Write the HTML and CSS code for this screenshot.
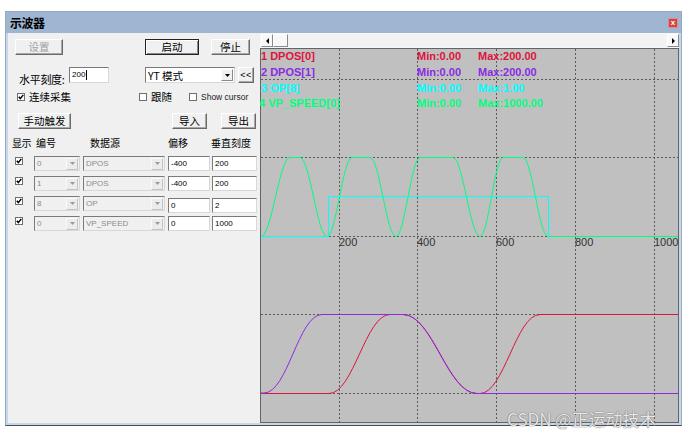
FILE: index.html
```html
<!DOCTYPE html>
<html lang="zh">
<head>
<meta charset="utf-8">
<title>示波器</title>
<link rel="stylesheet" href="styles.css">
</head>
<body>
<div class="window">
  <div class="titlebar">
    <span class="title">示波器</span>
    <span class="close">x</span>
  </div>
  <div class="body">
    <div class="panel">
      <div class="row r1">
        <div class="btn disabled b-set">设置</div>
        <div class="btn default b-start">启动</div>
        <div class="btn b-stop">停止</div>
      </div>
      <div class="row r2">
        <span class="lbl">水平刻度:</span>
        <div class="edit e-h">200<span class="caret"></span></div>
        <div class="combo c-mode"><span class="ctext">YT 模式</span><span class="drop"><svg width="5" height="3" viewBox="0 0 5 3"><path d="M0 0H5L2.5 3Z"/></svg></span></div>
        <div class="btn b-back">&lt;&lt;</div>
      </div>
      <div class="row r3">
        <div class="chk g1"><span class="box"><svg width="6" height="6" viewBox="0 0 6 6"><polyline points="0.8,2.8 2.3,4.6 5.3,0.9"/></svg></span><span>连续采集</span></div>
        <div class="chk g2"><span class="box"></span><span>跟随</span></div>
        <div class="chk g3"><span class="box"></span><span class="latin">Show cursor</span></div>
      </div>
      <div class="row r4">
        <div class="btn b-manual">手动触发</div>
        <div class="btn b-in">导入</div>
        <div class="btn b-out">导出</div>
      </div>
      <div class="tgrid thead">
        <span class="h1">显示</span>
        <span class="h2">编号</span>
        <span class="h3">数据源</span>
        <span class="h4">偏移</span>
        <span class="h5">垂直刻度</span>
      </div>
      <div class="tgrid trow">
        <span class="box tbox"><svg width="6" height="6" viewBox="0 0 6 6"><polyline points="0.8,2.8 2.3,4.6 5.3,0.9"/></svg></span>
        <div class="combo dis c-id"><span class="ctext">0</span><span class="drop"><svg width="5" height="3" viewBox="0 0 5 3"><path d="M0 0H5L2.5 3Z"/></svg></span></div>
        <div class="combo dis c-src"><span class="ctext">DPOS</span><span class="drop"><svg width="5" height="3" viewBox="0 0 5 3"><path d="M0 0H5L2.5 3Z"/></svg></span></div>
        <div class="edit c-off">-400</div>
        <div class="edit c-scale">200</div>
      </div>
      <div class="tgrid trow">
        <span class="box tbox"><svg width="6" height="6" viewBox="0 0 6 6"><polyline points="0.8,2.8 2.3,4.6 5.3,0.9"/></svg></span>
        <div class="combo dis c-id"><span class="ctext">1</span><span class="drop"><svg width="5" height="3" viewBox="0 0 5 3"><path d="M0 0H5L2.5 3Z"/></svg></span></div>
        <div class="combo dis c-src"><span class="ctext">DPOS</span><span class="drop"><svg width="5" height="3" viewBox="0 0 5 3"><path d="M0 0H5L2.5 3Z"/></svg></span></div>
        <div class="edit c-off">-400</div>
        <div class="edit c-scale">200</div>
      </div>
      <div class="tgrid trow">
        <span class="box tbox"><svg width="6" height="6" viewBox="0 0 6 6"><polyline points="0.8,2.8 2.3,4.6 5.3,0.9"/></svg></span>
        <div class="combo dis c-id"><span class="ctext">8</span><span class="drop"><svg width="5" height="3" viewBox="0 0 5 3"><path d="M0 0H5L2.5 3Z"/></svg></span></div>
        <div class="combo dis c-src"><span class="ctext">OP</span><span class="drop"><svg width="5" height="3" viewBox="0 0 5 3"><path d="M0 0H5L2.5 3Z"/></svg></span></div>
        <div class="edit c-off low">0</div>
        <div class="edit c-scale low">2</div>
      </div>
      <div class="tgrid trow">
        <span class="box tbox"><svg width="6" height="6" viewBox="0 0 6 6"><polyline points="0.8,2.8 2.3,4.6 5.3,0.9"/></svg></span>
        <div class="combo dis c-id"><span class="ctext">0</span><span class="drop"><svg width="5" height="3" viewBox="0 0 5 3"><path d="M0 0H5L2.5 3Z"/></svg></span></div>
        <div class="combo dis c-src"><span class="ctext">VP_SPEED</span><span class="drop"><svg width="5" height="3" viewBox="0 0 5 3"><path d="M0 0H5L2.5 3Z"/></svg></span></div>
        <div class="edit c-off">0</div>
        <div class="edit c-scale">1000</div>
      </div>
    </div>
    <div class="scope">
      <div class="hscroll">
        <div class="sb-btn"><svg width="3" height="6" viewBox="0 0 3 6"><path d="M3 0V6L0 3Z"/></svg></div>
        <div class="sb-thumb"></div>
        <div class="sb-track"></div>
        <div class="sb-btn"><svg width="3" height="6" viewBox="0 0 3 6"><path d="M0 0V6L3 3Z"/></svg></div>
      </div>
      <svg class="plot" width="419" height="375" viewBox="0 0 419 375">
        <rect x="0.5" y="0.5" width="418" height="374" fill="#c0c0c0" stroke="#646464"/>
        <g class="grid" stroke="#5a5a5a" stroke-width="1" stroke-dasharray="2 2" fill="none">
          <path d="M79.5 1V374M157.5 1V374M236.5 1V374M315.5 1V374M394.5 1V374"/>
          <path d="M1 31.5H418M1 109.5H418M1 188.5H418M1 266.5H418M1 345.5H418"/>
        </g>
        <g class="legend" font-family="Liberation Sans, Arial, sans-serif" font-weight="bold" font-size="11">
          <text x="1" y="12" fill="#dc143c">1 DPOS[0]</text>
          <text x="157" y="12" fill="#dc143c">Min:0.00</text>
          <text x="218" y="12" fill="#dc143c">Max:200.00</text>
          <text x="1" y="28" fill="#8a2be2">2 DPOS[1]</text>
          <text x="157" y="28" fill="#8a2be2">Min:0.00</text>
          <text x="218" y="28" fill="#8a2be2">Max:200.00</text>
          <text x="1" y="44" fill="#00ffff">3 OP[8]</text>
          <text x="157" y="44" fill="#00ffff">Min:0.00</text>
          <text x="218" y="44" fill="#00ffff">Max:1.00</text>
          <text x="-1" y="59" fill="#00ff7f">4 VP_SPEED[0]</text>
          <text x="157" y="59" fill="#00ff7f">Min:0.00</text>
          <text x="218" y="59" fill="#00ff7f">Max:1000.00</text>
        </g>
        <g class="axis" font-family="Liberation Sans, Arial, sans-serif" font-size="11" fill="#333">
          <text x="79" y="198">200</text>
          <text x="157" y="198">400</text>
          <text x="236" y="198">600</text>
          <text x="315" y="198">800</text>
          <text x="394" y="198">1000</text>
        </g>
        <g fill="none" stroke-width="1">
          <path stroke="#00ff7f" d="M1 188.5C11.6 188.5 19.4 109.5 30 109.5H40C49.8 109.5 57.2 188.5 67 188.5C76.1 188.5 82.9 109.5 92 109.5H110C119.5 109.5 126.5 188.5 136 188.5C144.7 188.5 151.3 109.5 160 109.5H193C202.8 109.5 210.2 188.5 220 188.5C228.4 188.5 234.6 109.5 243 109.5H263C272.1 109.5 278.9 188.5 288 188.5H418"/>
          <path stroke="#00ffff" d="M1 188.5H68.5V148.5H288.5V188.5"/>
          <path stroke="#dc143c" d="M1 345.5H69C93.4 345.5 105.6 266.5 130 266.5H143C172.6 266.5 187.4 345.5 217 345.5H220C244 345.5 256 266.5 280 266.5H418"/>
          <path stroke="#8a2be2" d="M1 345H4C27.6 345 38.4 266.5 62 266.5H143C172.6 266.5 187.4 345.5 217 345.5H418"/>
        </g>
      </svg>
    </div>
  </div>
</div>
<div class="watermark">CSDN @正运动技术</div>
</body>
</html>
```

FILE: styles.css
```css
* { box-sizing: border-box; }

body {
  margin: 0;
  background: #ffffff;
  font-family: "Noto Sans CJK SC", "Liberation Sans", sans-serif;
  font-size: 11px;
  color: #000;
}

.window {
  width: 677px;
  height: 415px;
  margin: 11px 0 0 5px;
  border: 1px solid #9aa8bb;
  border-bottom-color: #4b4b4b;
  background: #c6d6eb;
  display: flex;
  flex-direction: column;
}

.titlebar {
  height: 21px;
  flex: none;
  background: #9fb6d3;
  display: flex;
  align-items: center;
  justify-content: space-between;
  padding: 0 3px 0 4px;
}

.title {
  font-weight: bold;
  font-size: 12px;
  line-height: 14px;
  letter-spacing: -0.5px;
}

.close {
  width: 10px;
  height: 10px;
  background: #d04646;
  border: 1px solid #e58a8a;
  color: #fff;
  font: bold 8px/7px "Liberation Sans", sans-serif;
  text-align: center;
}

.body {
  flex: 1;
  display: flex;
  padding: 0 2px 2px 2px;
}

.panel {
  width: 252px;
  flex: none;
  background: #f0f0f0;
  padding-top: 6px;
  display: flex;
  flex-direction: column;
}

.row {
  display: flex;
  align-items: center;
  flex: none;
}

.r1 { height: 16px; }
.r2 { height: 16px; margin-top: 12px; }
.r3 { height: 12px; margin-top: 8px; }
.r4 { height: 16px; margin-top: 10px; }

.btn {
  height: 16px;
  display: flex;
  align-items: center;
  justify-content: center;
  background: #f0f0f0;
  border: 1px solid;
  border-color: #ffffff #6a6a6a #6a6a6a #ffffff;
  box-shadow: inset -1px -1px 0 #a8a8a8;
  font-size: 10.5px;
  line-height: 12px;
  flex: none;
}

.btn.default {
  border-color: #222;
  box-shadow: inset 1px 1px 0 #fff, inset -1px -1px 0 #8a8a8a;
}

.btn.disabled { color: #a0a0a0; }

.b-set { margin-left: 7px; width: 48px; }
.b-start { margin-left: 82px; width: 54px; }
.b-stop { margin-left: 12px; width: 39px; }
.b-back { margin-left: 3px; width: 16px; font: 9px/10px "Liberation Sans", sans-serif; letter-spacing: 0.5px; }
.b-manual { margin-left: 10px; width: 53px; }
.b-in { margin-left: 101px; width: 35px; }
.b-out { margin-left: 14px; width: 35px; }

.lbl {
  margin-left: 11px;
  width: 50px;
  flex: none;
  line-height: 12px;
  position: relative;
  top: 4px;
  letter-spacing: -0.3px;
}

.edit {
  height: 16px;
  background: #fff;
  border: 1px solid;
  border-color: #7a7a7a #d8d8d8 #d8d8d8 #7a7a7a;
  font: 8px/14px "Liberation Sans", sans-serif;
  padding-left: 2px;
  display: flex;
  align-items: center;
  flex: none;
}

.e-h { width: 40px; }

.caret {
  display: inline-block;
  width: 1px;
  height: 10px;
  background: #000;
  margin-left: 1px;
}

.combo {
  height: 16px;
  background: #fff;
  border: 1px solid;
  border-color: #7a7a7a #d8d8d8 #d8d8d8 #7a7a7a;
  display: flex;
  align-items: center;
  padding: 1px;
  flex: none;
}

.ctext {
  flex: 1;
  padding-left: 1px;
  white-space: nowrap;
  line-height: 13px;
}

.c-mode {
  margin-left: 36px;
  width: 90px;
}

.c-mode .ctext { font-size: 10.5px; line-height: 13px; }

.drop {
  width: 12px;
  height: 12px;
  flex: none;
  background: #f0f0f0;
  border: 1px solid;
  border-color: #ffffff #8a8a8a #8a8a8a #ffffff;
  display: flex;
  align-items: center;
  justify-content: center;
}

.drop svg { fill: #000; }

.combo.dis {
  background: #f0f0f0;
  color: #8c8c8c;
  font: 8px/12px "Liberation Sans", sans-serif;
}

.combo.dis .drop {
  background: #ececec;
  border-color: #fafafa #c4c4c4 #c4c4c4 #fafafa;
}

.combo.dis .drop svg { fill: #9a9a9a; }

.chk {
  display: flex;
  align-items: center;
  gap: 4px;
  flex: none;
  line-height: 12px;
  font-size: 10.5px;
}

.g1 { margin-left: 9px; width: 122px; }
.g2 { width: 50px; }
.g3 { flex: 1; }

.latin { font: 8.5px/12px "Liberation Sans", sans-serif; color: #222; }

.box {
  width: 8px;
  height: 8px;
  flex: none;
  background: #fff;
  border: 1px solid #6e6e6e;
  display: flex;
  align-items: center;
  justify-content: center;
}

.box svg polyline {
  fill: none;
  stroke: #000;
  stroke-width: 1.5;
}

.tgrid {
  display: grid;
  grid-template-columns: 26px 49px 85px 44px 45px;
  flex: none;
}

.thead {
  margin-top: 8px;
  height: 12px;
  line-height: 12px;
  font-size: 10px;
}

.h1 { padding-left: 4px; letter-spacing: -0.5px; }
.h2 { padding-left: 2px; }
.h3 { padding-left: 7px; }
.h5 { margin-left: -1px; }

.trow {
  height: 15px;
  margin-top: 5px;
  align-items: start;
}

.thead + .trow { margin-top: 7px; }

.trow .combo, .trow .edit { height: 15px; }

.tbox { margin-left: 7px; margin-top: 1px; }

.c-id { width: 46px; }
.c-src { width: 82px; }
.c-off { width: 42px; }
.c-scale { width: 45px; }
.edit.low { margin-top: 2px; }

.scope {
  width: 419px;
  flex: none;
  display: flex;
  flex-direction: column;
}

.hscroll {
  height: 15px;
  flex: none;
  display: flex;
  background: #f6f6f6;
  padding: 1px 0 1px 1px;
}

.sb-btn {
  width: 12px;
  height: 13px;
  background: #f8f8f8;
  border: 1px solid;
  border-color: #ffffff #8a8a8a #8a8a8a #ffffff;
  display: flex;
  align-items: center;
  justify-content: center;
  flex: none;
}

.sb-btn svg { fill: #000; }

.sb-thumb {
  width: 15px;
  height: 13px;
  background: #f8f8f8;
  border: 1px solid;
  border-color: #ffffff #8a8a8a #8a8a8a #ffffff;
  flex: none;
}

.sb-track {
  flex: 1;
  background: #f3f3f3;
}

.plot {
  display: block;
  flex: none;
}

.watermark {
  position: absolute;
  left: 507px;
  top: 409px;
  font-family: "Noto Sans CJK SC", sans-serif;
  font-size: 17px;
  line-height: 20px;
  color: rgba(255, 255, 255, 0.85);
  text-shadow: 0 0 1px #6a6a6a, 0 0 1px #6a6a6a;
  white-space: nowrap;
}
```
